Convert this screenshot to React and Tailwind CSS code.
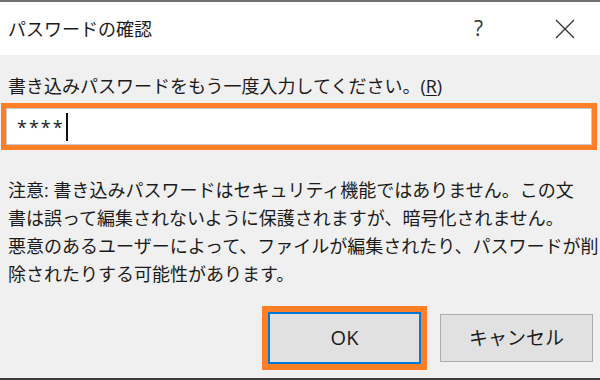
import React from 'react';

const font = { fontFamily: '"Open Sans", "Noto Sans CJK JP", sans-serif' };

const notice = [
  '注意: 書き込みパスワードはセキュリティ機能ではありません。この文',
  '書は誤って編集されないように保護されますが、暗号化されません。',
  '悪意のあるユーザーによって、ファイルが編集されたり、パスワードが削',
  '除されたりする可能性があります。',
];

const App = () => {
  return (
    <div
      className="w-[600px] h-[380px] bg-[#f0f0f0] border-t-2 border-b-2 border-t-[#707070] border-b-[#3a3a3a] flex flex-col text-[#1b1b1b] overflow-hidden"
      style={font}
    >
      {/* title bar */}
      <div className="h-[53px] bg-white flex items-center shrink-0">
        <span className="pl-2 text-[18px] leading-none">パスワードの確認</span>
        <span className="ml-auto mr-[72px] text-[21px] leading-none text-[#333]">?</span>
        <svg width="20" height="20" viewBox="0 0 20 20" className="mr-[25px]">
          <path d="M1 1 L19 19 M19 1 L1 19" stroke="#333" strokeWidth="1.3" fill="none" />
        </svg>
      </div>

      <div className="pt-[17px] px-2 text-[18px] leading-[28px] whitespace-nowrap">
        書き込みパスワードをもう一度入力してください。(<span className="underline underline-offset-2">R</span>)
      </div>

      <div className="mt-[3px] ml-[1px] w-[596px] h-[47px] border-[5px] border-[#ff7f27] bg-white">
        <div className="h-full border border-[#c8c8c8] flex items-center pl-[10px]">
          <span className="text-[18px] leading-none tracking-[2px]">****</span>
          <span className="w-[2px] h-[28px] bg-[#111] ml-[1px]" />
        </div>
      </div>

      <div className="mt-[26px] pl-2 text-[18px] leading-[28px]">
        {notice.map((line) => (
          <div key={line} className="whitespace-nowrap">{line}</div>
        ))}
      </div>

      <div className="mt-[18px] flex items-center justify-end pr-[7px] gap-[13px]">
        <div className="w-[165px] h-[64px] border-[6px] border-[#ff7f27] bg-[#ff7f27]">
          <button className="w-full h-full bg-[#e1e1e1] border-2 border-[#0078d7] text-[20px] leading-none">
            OK
          </button>
        </div>
        <button className="w-[153px] h-[48px] bg-[#e1e1e1] border border-[#adadad] text-[19px] leading-none">
          キャンセル
        </button>
      </div>
    </div>
  );
};

export default App;
